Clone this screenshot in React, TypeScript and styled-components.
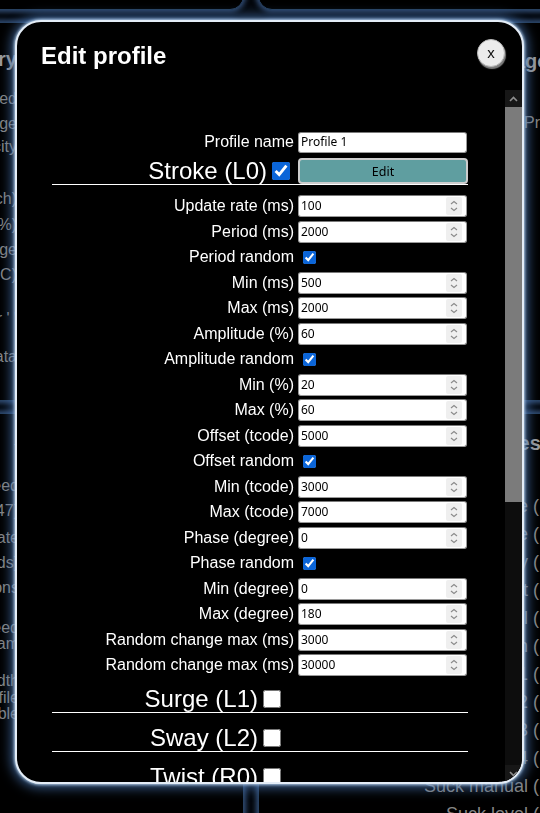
import React from "react";
import styled, { createGlobalStyle } from "styled-components";

const Global = createGlobalStyle`
  html, body { margin: 0; padding: 0; background: #04070c; overflow: hidden; }
  body { width: 540px; height: 813px; font-family: "Liberation Sans", Arial, sans-serif; }
  #root { width: 540px; height: 813px; overflow: hidden; }
`;

/* ---------- background dashboard ---------- */
const Backdrop = styled.div`
  display: grid;
  grid-template-columns: 264px 344px;
  grid-template-rows: 110px 379px 540px;
  column-gap: 14px;
  row-gap: 12px;
  margin: -100px 0 0 -20px;
`;

const Panel = styled.section<{ $align: "start" | "end"; $padRight?: number; $padTop?: number }>`
  background: #000;
  border: 1px solid #27405f;
  border-radius: 14px;
  box-shadow: 0 0 5px 2px rgba(80, 125, 190, 0.6);
  overflow: hidden;
  display: flex;
  flex-direction: column;
  align-items: ${(p) => (p.$align === "end" ? "flex-end" : "flex-start")};
  padding: ${(p) => p.$padTop ?? 0}px ${(p) => p.$padRight ?? 0}px 0 0;
`;

const BgLine = styled.div<{ $gap: number; $indent?: number; $size?: number; $bold?: boolean }>`
  margin-top: ${(p) => p.$gap}px;
  margin-left: ${(p) => p.$indent ?? 0}px;
  color: ${(p) => (p.$bold ? "#9a9a9a" : "#858585")};
  font-size: ${(p) => p.$size ?? 16}px;
  font-weight: ${(p) => (p.$bold ? 700 : 400)};
  line-height: 20px;
  white-space: nowrap;
`;

/* ---------- modal ---------- */
const Modal = styled.div`
  position: fixed;
  left: 15px;
  top: 20px;
  width: 509px;
  height: 764px;
  box-sizing: border-box;
  border: 2px solid #e4edf7;
  border-radius: 26px;
  background: #000;
  box-shadow: 0 0 3px 1px rgba(190, 215, 240, 0.9), 0 0 12px 4px rgba(70, 115, 175, 0.75);
  overflow: hidden;
  display: flex;
  flex-direction: column;
`;

const Header = styled.header`
  height: 68px;
  flex: 0 0 68px;
  display: flex;
  align-items: center;
  justify-content: space-between;
  padding: 0 17px 0 24px;
`;

const Title = styled.h2`
  margin: 0;
  color: #fff;
  font-size: 24px;
  line-height: 28px;
  font-weight: 700;
`;

const CloseButton = styled.button`
  align-self: flex-start;
  margin-top: 17px;
  width: 28px;
  height: 28px;
  border-radius: 50%;
  border: 1px solid #b8b8b8;
  background: #ececec;
  box-shadow: 1px 2px 1px rgba(140, 140, 140, 0.9);
  font-family: "Liberation Sans", Arial, sans-serif;
  font-size: 15px;
  line-height: 24px;
  color: #111;
  padding: 0;
  cursor: pointer;
`;

const Body = styled.div`
  flex: 1;
  min-height: 0;
  display: flex;
`;

const Content = styled.div`
  flex: 1;
  overflow: hidden;
`;

const Form = styled.div`
  width: 416px;
  padding: 41px 0 0 35px;
  display: flex;
  flex-direction: column;
`;

const Scrollbar = styled.div`
  width: 17px;
  flex: 0 0 17px;
  display: flex;
  flex-direction: column;
  background: #0d0d0d;
`;

const ScrollButton = styled.div`
  height: 17px;
  flex: 0 0 17px;
  background: #171717;
  display: flex;
  align-items: center;
  justify-content: center;
`;

const Thumb = styled.div`
  flex: 0 0 395px;
  background: #7b7b7b;
`;

const Track = styled.div`
  flex: 1;
`;

const Row = styled.div<{ $gapAfter?: number }>`
  display: grid;
  grid-template-columns: 242px 170px;
  column-gap: 4px;
  align-items: center;
  margin-bottom: ${(p) => p.$gapAfter ?? 0}px;
`;

const FieldGrid = styled.div`
  display: grid;
  grid-template-columns: 242px 170px;
  grid-auto-rows: 22px;
  column-gap: 4px;
  row-gap: 3.5px;
  align-items: center;
  padding-top: 10px;
`;

const FieldLabel = styled.label`
  color: #fff;
  font-size: 16px;
  line-height: 22px;
  text-align: right;
  white-space: nowrap;
`;

const InputBox = styled.div<{ $h: number }>`
  display: flex;
  align-items: center;
  height: ${(p) => p.$h}px;
  box-sizing: border-box;
  width: 169px;
  border: 1px solid #9a9a9a;
  border-top-color: #7a7a7a;
  border-radius: 3px;
  background: #fff;
  padding: 0 4px 0 2px;
`;

const TextInput = styled.input`
  flex: 1;
  min-width: 0;
  border: none;
  outline: none;
  padding: 0;
  background: transparent;
  color: #000;
  font-family: "Noto Sans", "Open Sans", sans-serif;
  font-size: 12px;
  line-height: 18px;
`;

const CheckCell = styled.div`
  display: flex;
  align-items: center;
`;

const SmallCheck = styled.input`
  width: 13px;
  height: 13px;
  margin: 0 0 0 5px;
  accent-color: #0b65d8;
`;

const Section = styled.div<{ $gapAfter: number }>`
  display: flex;
  flex-direction: column;
  margin-bottom: ${(p) => p.$gapAfter}px;
`;

const SectionHead = styled.div<{ $collapsed?: boolean }>`
  height: 26px;
  display: flex;
  justify-content: flex-end;
  align-items: center;
  padding-right: ${(p) => (p.$collapsed ? 9 : 0)}px;
`;

const SectionTitle = styled.span`
  color: #fff;
  font-size: 24px;
  line-height: 26px;
  white-space: nowrap;
`;

const BigCheck = styled.input`
  width: 18px;
  height: 18px;
  margin: 0 4px 0 5px;
  accent-color: #0b65d8;
`;

const EditButton = styled.button`
  height: 26px;
  width: 170px;
  box-sizing: border-box;
  border: 2px solid #cdcdcd;
  border-radius: 4px;
  background: #5f9ea0;
  color: #000;
  font-family: "Noto Sans", "Open Sans", sans-serif;
  font-size: 12.5px;
  padding: 0;
`;

const Divider = styled.div`
  height: 1px;
  background: #fff;
`;

const Spinner = () => (
  <svg width="16" height="18" viewBox="0 0 16 18">
    <rect x="0" y="0" width="16" height="18" rx="2" fill="#efefef" />
    <path d="M5 7 L8 4.5 L11 7" fill="none" stroke="#8a8a8a" strokeWidth="1.1" />
    <path d="M5 11 L8 13.5 L11 11" fill="none" stroke="#8a8a8a" strokeWidth="1.1" />
  </svg>
);

const Chevron = ({ up }: { up: boolean }) => (
  <svg width="9" height="6" viewBox="0 0 9 6">
    <path d={up ? "M1 5 L4.5 1.5 L8 5" : "M1 1 L4.5 4.5 L8 1"} fill="none" stroke="#8e8e8e" strokeWidth="1.6" />
  </svg>
);

type Field = { label: string; value?: string; check?: boolean };

const strokeFields: Field[] = [
  { label: "Update rate (ms)", value: "100" },
  { label: "Period (ms)", value: "2000" },
  { label: "Period random", check: true },
  { label: "Min (ms)", value: "500" },
  { label: "Max (ms)", value: "2000" },
  { label: "Amplitude (%)", value: "60" },
  { label: "Amplitude random", check: true },
  { label: "Min (%)", value: "20" },
  { label: "Max (%)", value: "60" },
  { label: "Offset (tcode)", value: "5000" },
  { label: "Offset random", check: true },
  { label: "Min (tcode)", value: "3000" },
  { label: "Max (tcode)", value: "7000" },
  { label: "Phase (degree)", value: "0" },
  { label: "Phase random", check: true },
  { label: "Min (degree)", value: "0" },
  { label: "Max (degree)", value: "180" },
  { label: "Random change max (ms)", value: "3000" },
  { label: "Random change max (ms)", value: "30000" },
];

const collapsedSections = ["Surge (L1)", "Sway (L2)", "Twist (R0)", "Roll (R1)", "Pitch (R2)"];

const leftTop = [
  { t: "Battery", gap: 0, bold: true, size: 20 },
  { t: "Speed", gap: 20 },
  { t: "Range", gap: 5 },
  { t: "Velocity", gap: 3 },
  { t: "Length (inch)", gap: 32 },
  { t: "Level (%)", gap: 6 },
  { t: "Voltage", gap: 5 },
  { t: "Temp (°C)", gap: 5 },
  { t: "Separator ' '", gap: 24 },
  { t: "Data", gap: 18 },
];

const leftBottom = [
  { t: "-", gap: 0 },
  { t: "Speed", gap: 22 },
  { t: "(0-47)", gap: 5 },
  { t: "Update", gap: 7 },
  { t: "(seconds)", gap: 5 },
  { t: "Positions", gap: 5 },
  { t: "Speed", gap: 20 },
  { t: "Param", gap: -4 },
  { t: "Width", gap: 17 },
  { t: "Profile", gap: -3 },
  { t: "Enable", gap: -4 },
];

const rightBottom = [
  "Stroke (",
  "Surge (",
  "Sway (",
  "Twist (",
  "Roll (",
  "Pitch (",
  "Vibe 1 (",
  "Vibe 2 (",
  "Vibe 3 (",
  "Vibe 4 (",
  "Suck manual (",
  "Suck level (",
];

export default function App() {
  return (
    <>
      <Global />
      <Backdrop>
        <Panel $align="end" />
        <Panel $align="start" />
        <Panel $align="end" $padRight={226} $padTop={26}>
          {leftTop.map((l, i) => (
            <BgLine key={i} $gap={l.gap} $bold={l.bold} $size={l.size}>
              {l.t}
            </BgLine>
          ))}
        </Panel>
        <Panel $align="start" $padTop={28}>
          <BgLine $gap={0} $indent={215} $bold $size={20}>
            Storage
          </BgLine>
          <BgLine $gap={42} $indent={265}>
            Profile 1
          </BgLine>
        </Panel>
        <Panel $align="end" $padRight={224} $padTop={20}>
          {leftBottom.map((l, i) => (
            <BgLine key={i} $gap={l.gap}>
              {l.t}
            </BgLine>
          ))}
        </Panel>
        <Panel $align="end" $padRight={62} $padTop={19}>
          <BgLine $gap={0} $bold $size={20} style={{ alignSelf: "flex-start", marginLeft: 234 }}>
            Axes
          </BgLine>
          {rightBottom.map((t, i) => (
            <BgLine key={i} $gap={i === 0 ? 43 : 8} $size={18}>
              {t}
            </BgLine>
          ))}
        </Panel>
      </Backdrop>

      <Modal>
        <Header>
          <Title>Edit profile</Title>
          <CloseButton>x</CloseButton>
        </Header>
        <Body>
          <Content>
            <Form>
              <Row $gapAfter={5}>
                <FieldLabel>Profile name</FieldLabel>
                <InputBox $h={21}>
                  <TextInput defaultValue="Profile 1" />
                </InputBox>
              </Row>

              <Section $gapAfter={10}>
                <Row>
                  <SectionHead>
                    <SectionTitle>Stroke (L0)</SectionTitle>
                    <BigCheck type="checkbox" defaultChecked />
                  </SectionHead>
                  <EditButton>Edit</EditButton>
                </Row>
                <Divider />
                <FieldGrid>
                  {strokeFields.map((f, i) => (
                    <React.Fragment key={i}>
                      <FieldLabel>{f.label}</FieldLabel>
                      {f.check ? (
                        <CheckCell>
                          <SmallCheck type="checkbox" defaultChecked />
                        </CheckCell>
                      ) : (
                        <InputBox $h={22}>
                          <TextInput defaultValue={f.value} />
                          <Spinner />
                        </InputBox>
                      )}
                    </React.Fragment>
                  ))}
                </FieldGrid>
              </Section>

              {collapsedSections.map((s) => (
                <Section key={s} $gapAfter={12}>
                  <Row>
                    <SectionHead $collapsed>
                      <SectionTitle>{s}</SectionTitle>
                      <BigCheck type="checkbox" />
                    </SectionHead>
                  </Row>
                  <Divider />
                </Section>
              ))}
            </Form>
          </Content>
          <Scrollbar>
            <ScrollButton>
              <Chevron up />
            </ScrollButton>
            <Thumb />
            <Track />
            <ScrollButton>
              <Chevron up={false} />
            </ScrollButton>
          </Scrollbar>
        </Body>
      </Modal>
    </>
  );
}
